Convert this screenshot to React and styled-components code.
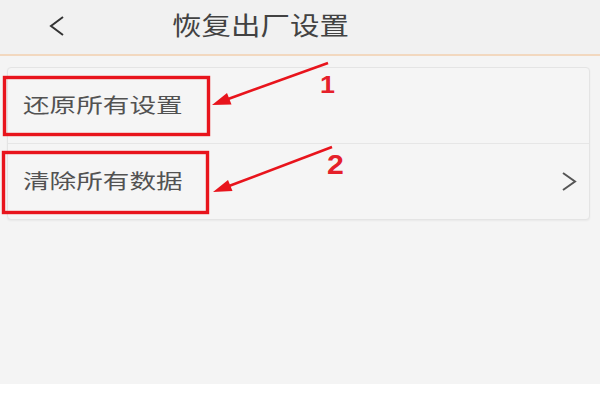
import React from "react";
import styled, { createGlobalStyle } from "styled-components";

const Global = createGlobalStyle`
  html, body { margin: 0; padding: 0; background: #ffffff; }
  body { font-family: "Noto Sans CJK SC", "Noto Sans", sans-serif; }
`;

const Screen = styled.div`
  position: relative;
  width: 600px;
  height: 384px;
  background: #f4f4f4;
  display: flex;
  flex-direction: column;
  overflow: hidden;
`;

const Header = styled.header`
  height: 54px;
  flex: none;
  background: #f1f1f1;
  border-bottom: 2px solid #f2d8bf;
  display: flex;
  align-items: center;
  position: relative;
`;

const BackButton = styled.div`
  width: 100px;
  height: 100%;
  display: flex;
  align-items: center;
  padding-left: 49px;
  box-sizing: border-box;
  margin-top: -2px;
`;

const Title = styled.h1`
  margin: 0 0 0 72px;
  font-size: 25px;
  font-weight: 400;
  color: #424242;
  line-height: 1;
  margin-top: -5px;
  display: inline-block;
  transform: scaleX(1.18);
  transform-origin: left center;
  font-family: "Noto Sans CJK SC", sans-serif;
`;

const Content = styled.main`
  padding: 11px 10px 0 7px;
`;

const Card = styled.section`
  background: #f5f5f5;
  border: 1px solid #e4e4e4;
  border-radius: 4px;
  box-shadow: 0 1px 2px rgba(0, 0, 0, 0.05);
  display: flex;
  flex-direction: column;
`;

const Row = styled.div`
  height: 75px;
  display: flex;
  align-items: center;
  justify-content: space-between;
  padding: 0 12px 0 15px;
  border-top: ${(p) => (p.$first ? "none" : "1px solid #e6e6e6")};
`;

const RowLabel = styled.span`
  display: inline-block;
  font-size: 20px;
  color: #525252;
  transform: scaleX(1.33);
  transform-origin: left center;
  font-family: "Noto Sans CJK SC", sans-serif;
  line-height: 1;
  margin-top: ${(p) => p.$dy || 0}px;
`;

const Overlay = styled.svg`
  position: absolute;
  left: 0;
  top: 0;
  width: 600px;
  height: 384px;
  pointer-events: none;
`;

const Marker = styled.span`
  position: absolute;
  left: ${(p) => p.$x}px;
  top: ${(p) => p.$y}px;
  font-family: "Liberation Sans", Arial, sans-serif;
  font-weight: 700;
  font-size: ${(p) => p.$size}px;
  line-height: 1;
  color: #e5202a;
  display: inline-block;
  transform: scaleX(1.12);
  transform-origin: left top;
`;

export default function App() {
  return (
    <>
      <Global />
      <Screen>
        <Header>
          <BackButton>
            <svg width="16" height="22" viewBox="0 0 16 22">
              <polyline points="14,2 2,11 14,20" fill="none" stroke="#333" strokeWidth="2" />
            </svg>
          </BackButton>
          <Title>恢复出厂设置</Title>
        </Header>
        <Content>
          <Card>
            <Row $first>
              <RowLabel $dy={-1}>还原所有设置</RowLabel>
            </Row>
            <Row>
              <RowLabel $dy={-1}>清除所有数据</RowLabel>
              <svg width="16" height="22" viewBox="0 0 16 22">
                <polyline points="2,2 14,10.5 2,19" fill="none" stroke="#555" strokeWidth="2" />
              </svg>
            </Row>
          </Card>
        </Content>

        <Overlay viewBox="0 0 600 384">
          <rect x="4.5" y="77.5" width="204" height="57" fill="none" stroke="#e8141c" strokeWidth="3.4" />
          <rect x="3.5" y="152.5" width="204" height="60" fill="none" stroke="#e8141c" strokeWidth="3.4" />
          <line x1="328" y1="63" x2="224" y2="100.5" stroke="#e8141c" strokeWidth="2.6" />
          <polygon points="212,105 231.5,104.5 227,93" fill="#e8141c" />
          <line x1="332" y1="147" x2="225" y2="187.5" stroke="#e8141c" strokeWidth="2.6" />
          <polygon points="213,192 232.5,191 228,180" fill="#e8141c" />
        </Overlay>
        <Marker $x={320} $y={73} $size={24}>1</Marker>
        <Marker $x={327} $y={152} $size={27}>2</Marker>
      </Screen>
    </>
  );
}
